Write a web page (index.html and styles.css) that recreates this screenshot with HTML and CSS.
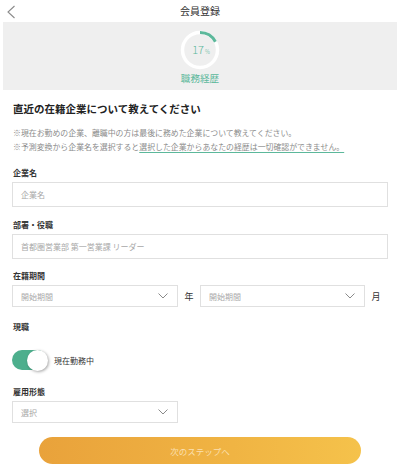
FILE: index.html
```html
<!DOCTYPE html>
<html lang="ja">
<head>
<meta charset="utf-8">
<title>会員登録</title>
<link rel="stylesheet" href="styles.css">
</head>
<body>
<header class="topbar">
  <span class="back">
    <svg width="10" height="14" viewBox="0 0 10 14"><path d="M8.5 1 L2 7 L8.5 13" fill="none" stroke="#8a8a8a" stroke-width="1.1"/></svg>
  </span>
  <h1 class="title">会員登録</h1>
  <span></span>
</header>
<section class="progress">
  <div class="ring">
    <svg width="40" height="40" viewBox="0 0 40 40">
      <circle cx="20" cy="20" r="17.5" fill="none" stroke="#ffffff" stroke-width="3.5"/>
      <circle cx="20" cy="20" r="17.5" fill="none" stroke="#5cb89b" stroke-width="3" stroke-dasharray="18.7 200" transform="rotate(-90 20 20)"/>
    </svg>
    <span class="pct">17<small>%</small></span>
  </div>
  <div class="step">職務経歴</div>
</section>
<main class="content">
  <h2 class="heading">直近の在籍企業について教えてください</h2>
  <p class="note">※現在お勤めの企業、離職中の方は最後に務めた企業について教えてください。<br>※予測変換から企業名を選択すると<span class="ul">選択した企業からあなたの経歴は一切確認ができません。</span></p>

  <label class="label l1">企業名</label>
  <div class="input">企業名</div>

  <label class="label l2">部署・役職</label>
  <div class="input">首都圏営業部 第一営業課 リーダー</div>

  <label class="label l3">在籍期間</label>
  <div class="period">
    <div class="select"><span>開始期間</span><svg width="10" height="6" viewBox="0 0 10 6"><path d="M0.5 0.5 L5 5 L9.5 0.5" fill="none" stroke="#8a8a8a" stroke-width="1"/></svg></div>
    <span class="unit">年</span>
    <div class="select"><span>開始期間</span><svg width="10" height="6" viewBox="0 0 10 6"><path d="M0.5 0.5 L5 5 L9.5 0.5" fill="none" stroke="#8a8a8a" stroke-width="1"/></svg></div>
    <span class="unit">月</span>
  </div>

  <label class="label l4">現職</label>
  <div class="toggle-row">
    <div class="toggle"><span class="knob"></span></div>
    <span class="toggle-text">現在勤務中</span>
  </div>

  <label class="label l5">雇用形態</label>
  <div class="select single"><span>選択</span><svg width="10" height="6" viewBox="0 0 10 6"><path d="M0.5 0.5 L5 5 L9.5 0.5" fill="none" stroke="#8a8a8a" stroke-width="1"/></svg></div>

  <div class="btn-wrap"><button class="next">次のステップへ</button></div>
</main>
</body>
</html>
```

FILE: styles.css
```css
* { box-sizing: border-box; }
html, body { margin: 0; padding: 0; }
body {
  width: 400px;
  height: 468px;
  overflow: hidden;
  background: #fff;
  font-family: "Noto Sans CJK JP", "Noto Sans", sans-serif;
  color: #333;
}
.topbar {
  height: 22px;
  display: grid;
  grid-template-columns: 30px 1fr 30px;
  align-items: center;
}
.back { display: flex; padding-left: 6px; padding-top: 1px; }
.title {
  margin: 0;
  text-align: center;
  font-size: 10px;
  font-weight: 400;
  color: #333;
  line-height: 22px;
}
.progress {
  margin: 0 3px;
  height: 68px;
  background: #efefef;
  display: flex;
  flex-direction: column;
  align-items: center;
  padding-top: 8px;
}
.ring {
  width: 40px;
  height: 40px;
  display: grid;
  place-items: center;
}
.ring svg, .ring .pct { grid-area: 1 / 1; }
.pct {
  font-size: 11px;
  color: #5cb89b;
  font-weight: 300;
  line-height: 1;
  padding-left: 2px;
}
.pct small { font-size: 5.5px; margin-left: 1px; }
.step {
  margin-top: 2px;
  font-size: 9.6px;
  line-height: 12px;
  color: #5cb89b;
}
.content { padding: 0 12px 0 13px; }
.heading {
  margin: 11px 0 0;
  font-size: 10.5px;
  line-height: 16px;
  font-weight: 700;
  color: #222;
}
.note {
  margin: 9px 0 0;
  font-size: 7.9px;
  line-height: 14px;
  color: #8c8c8c;
  white-space: nowrap;
}
.ul {
  text-decoration: underline;
  text-decoration-color: #5cb89b;
  text-underline-offset: 2px;
}
.label {
  display: block;
  font-size: 8px;
  line-height: 12px;
  font-weight: 700;
  color: #333;
  margin-bottom: 3px;
}
.l1 { margin-top: 13px; }
.l2 { margin-top: 12px; }
.l3 { margin-top: 11px; margin-bottom: 3px; }
.l4 { margin-top: 14px; }
.l5 { margin-top: 16px; margin-bottom: 3px; }
.input {
  margin-left: -1px;
  height: 25px;
  border: 1px solid #e0e0e0;
  display: flex;
  align-items: center;
  padding-left: 8px;
  font-size: 8px;
  color: #a8a8a8;
}
.period {
  margin-left: -1px;
  display: grid;
  grid-template-columns: 166px 22px 165px 22px;
  align-items: center;
}
.select {
  height: 22px;
  border: 1px solid #e0e0e0;
  display: flex;
  align-items: center;
  justify-content: space-between;
  padding: 0 9px 0 8px;
  font-size: 8px;
  color: #a8a8a8;
}
.select.single { width: 166px; margin-left: -1px; }
.unit {
  text-align: center;
  font-size: 9px;
  color: #333;
}
.toggle-row {
  margin-top: 17px;
  display: flex;
  align-items: center;
  margin-left: -1px;
}
.toggle {
  width: 35px;
  height: 20px;
  border-radius: 10px;
  background: #4daf8d;
  display: flex;
  justify-content: flex-end;
  align-items: center;
}
.knob {
  width: 21px;
  height: 21px;
  border-radius: 50%;
  background: #fff;
  box-shadow: 1px 1px 3px rgba(0,0,0,0.35);
  margin-right: -1px;
}
.toggle-text {
  margin-left: 7px;
  font-size: 8px;
  color: #333;
}
.btn-wrap {
  margin-top: 14px;
  display: flex;
  justify-content: center;
  margin-left: -1px;
}
.next {
  width: 322px;
  height: 27px;
  border: none;
  border-radius: 14px;
  background: linear-gradient(90deg, #e9a23b 0%, #f0b443 60%, #f5c24b 100%);
  color: rgba(255, 240, 215, 0.75);
  font-family: "Noto Sans CJK JP", sans-serif;
  font-size: 8.5px;
  padding: 0;
}
```
